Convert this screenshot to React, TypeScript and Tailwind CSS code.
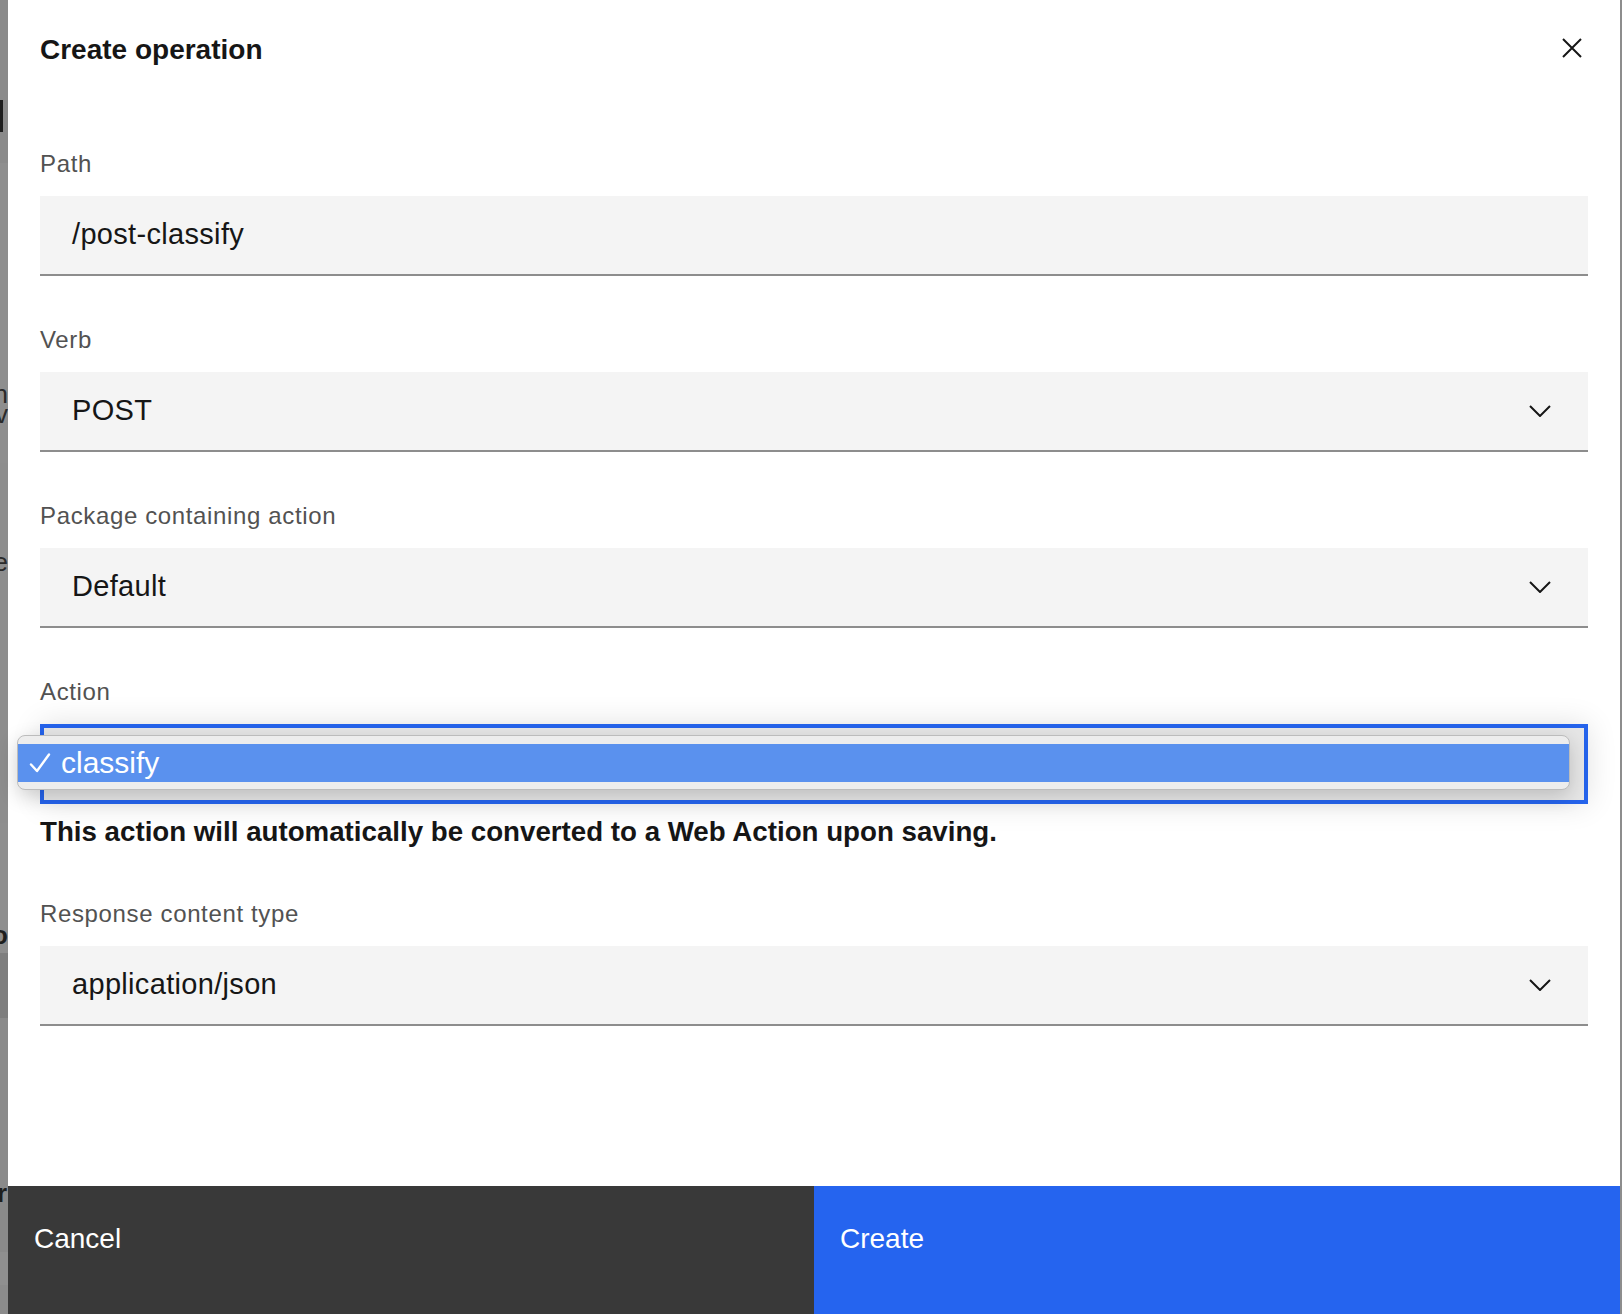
import React from 'react';

const font = { fontFamily: '"Liberation Sans", Arial, sans-serif' };

// Bandes de l'arrière-plan visible à gauche (page sous le voile)
const bands = [
  { h: 'h-[163px]', c: 'bg-[#8a8a8a]' },
  { h: 'h-[300px]', c: 'bg-[#8e8e8e]' },
  { h: 'h-[360px]', c: 'bg-[#8d8d8d]' },
  { h: 'h-[130px]', c: 'bg-[#8e8e8e]' },
  { h: 'h-[65px]', c: 'bg-[#7e7e7e]' },
  { h: 'h-[234px]', c: 'bg-[#8a8a8a]' },
  { h: 'h-[33px]', c: 'bg-[#8f8f8f]' },
  { h: 'h-[29px]', c: 'bg-[#8b8b8b]' },
];

function Chevron() {
  return (
    <svg width="22" height="12" viewBox="0 0 22 12" fill="none" className="shrink-0">
      <polyline points="1,1 11,11 21,1" stroke="#161616" strokeWidth="2" />
    </svg>
  );
}

function Field({ label, value, select }: { label: string; value: string; select?: boolean }) {
  return (
    <div className="flex flex-col">
      <label className="text-[24px] leading-[32px] tracking-[0.64px] text-[#525252] mb-4">{label}</label>
      <div className="h-[80px] bg-[#f4f4f4] border-b-2 border-[#8d8d8d] flex items-center pl-8 pr-[37px]">
        <span className="flex-1 text-[29px] tracking-[0.32px] text-[#161616]">{value}</span>
        {select && <Chevron />}
      </div>
    </div>
  );
}

export default function App() {
  return (
    <div className="w-[1622px] h-[1314px] overflow-hidden flex bg-[#8d8d8d]" style={font}>
      {/* Arrière-plan assombri, à gauche */}
      <div className="w-[8px] relative overflow-hidden flex flex-col shrink-0">
        {bands.map((b, i) => (
          <div key={i} className={`${b.h} ${b.c} shrink-0`} />
        ))}
        <div className="absolute left-0 top-[100px] w-[3px] h-[32px] bg-[#1e1e1e]" />
        <span className="absolute right-0 top-[384px] text-[26px] leading-[20px] text-right whitespace-pre text-[#2a2a2a]">{'n\nv'}</span>
        <span className="absolute right-0 top-[553px] text-[26px] leading-[18px] text-[#2a2a2a]">e</span>
        <span className="absolute right-0 top-[926px] text-[26px] leading-[18px] font-bold text-[#1e1e1e]">o</span>
        <span className="absolute right-[1px] top-[1184px] text-[26px] leading-[18px] font-bold text-[#1e1e1e]">r</span>
      </div>

      {/* Fenêtre modale */}
      <div className="w-[1612px] shrink-0 bg-white flex flex-col">
        <div className="flex items-start justify-between pl-8 pr-[38px] pt-8">
          <h2 className="text-[28px] leading-[36px] font-bold text-[#161616]">Create operation</h2>
          <svg width="20" height="20" viewBox="0 0 20 20" className="mt-[6px]">
            <path d="M1 1L19 19M19 1L1 19" stroke="#161616" strokeWidth="2" />
          </svg>
        </div>

        <div className="flex flex-col px-8 pt-[80px] gap-12">
          <Field label="Path" value="/post-classify" />
          <Field label="Verb" value="POST" select />
          <Field label="Package containing action" value="Default" select />

          <div className="flex flex-col">
            <label className="text-[24px] leading-[32px] tracking-[0.64px] text-[#525252] mb-4">Action</label>
            <div className="relative h-[80px] border-4 border-[#2563eb] bg-[#e6e6e6] shadow-[0_0_30px_rgba(0,0,0,0.12)]">
              {/* Menu natif ouvert */}
              <div className="absolute left-[-27px] top-[7px] w-[1553px] h-[55px] rounded-[8px] bg-[#ededed] border border-[#bcbcbc] shadow-[0_6px_20px_rgba(0,0,0,0.18)] flex flex-col pt-[8px]">
                <div className="h-[38px] bg-[#5a91ee] flex items-center text-white text-[30px] leading-[38px]">
                  <svg width="22" height="20" viewBox="0 0 22 20" fill="none" className="ml-[11px] mr-[10px] shrink-0">
                    <path d="M2 11.5L8 18L20 1.5" stroke="white" strokeWidth="2.4" strokeLinecap="round" strokeLinejoin="round" />
                  </svg>
                  <span>classify</span>
                </div>
              </div>
            </div>
            <p className="mt-[10px] text-[27.7px] leading-[36px] font-bold text-[#161616]">
              This action will automatically be converted to a Web Action upon saving.
            </p>
          </div>

          <Field label="Response content type" value="application/json" select />
        </div>

        <div className="mt-auto flex h-[128px] shrink-0">
          <button className="w-[806px] bg-[#393939] text-white text-[28px] leading-[36px] text-left pl-[26px] pt-[35px] flex items-start">
            Cancel
          </button>
          <button className="w-[806px] bg-[#2564ef] text-white text-[28px] leading-[36px] text-left pl-[26px] pt-[35px] flex items-start">
            Create
          </button>
        </div>
      </div>

      <div className="w-[2px] bg-[#8d8d8d] shrink-0" />
    </div>
  );
}
